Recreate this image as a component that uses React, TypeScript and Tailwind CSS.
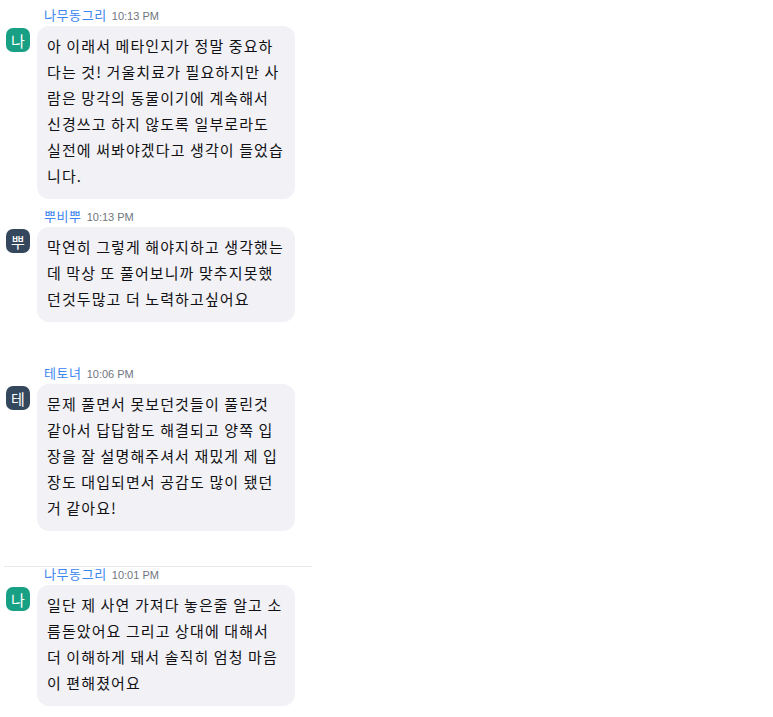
import React from 'react';

interface Message {
    id: number;
    name: string;
    initial: string;
    avatarColor: string;
    time: string;
    lines: string[];
    spacing: string;
}

const messages: Message[] = [
    {
        id: 1,
        name: '나무동그리',
        initial: '나',
        avatarColor: 'bg-[#17a083]',
        time: '10:13 PM',
        spacing: 'pt-[6px]',
        lines: [
            '아 이래서 메타인지가 정말 중요하',
            '다는 것! 거울치료가 필요하지만 사',
            '람은 망각의 동물이기에 계속해서',
            '신경쓰고 하지 않도록 일부로라도',
            '실전에 써봐야겠다고 생각이 들었습',
            '니다.',
        ],
    },
    {
        id: 2,
        name: '뿌비뿌',
        initial: '뿌',
        avatarColor: 'bg-[#34475d]',
        time: '10:13 PM',
        spacing: 'mt-[8px]',
        lines: [
            '막연히 그렇게 해야지하고 생각했는',
            '데 막상 또 풀어보니까 맞추지못했',
            '던것두많고 더 노력하고싶어요',
        ],
    },
    {
        id: 3,
        name: '테토녀',
        initial: '테',
        avatarColor: 'bg-[#34475d]',
        time: '10:06 PM',
        spacing: 'mt-[42px]',
        lines: [
            '문제 풀면서 못보던것들이 풀린것',
            '같아서 답답함도 해결되고 양쪽 입',
            '장을 잘 설명해주셔서 재밌게 제 입',
            '장도 대입되면서 공감도 많이 됐던',
            '거 같아요!',
        ],
    },
];

const last: Message = {
    id: 4,
    name: '나무동그리',
    initial: '나',
    avatarColor: 'bg-[#17a083]',
    time: '10:01 PM',
    spacing: '-mt-[2px]',
    lines: [
        '일단 제 사연 가져다 놓은줄 알고 소',
        '름돋았어요 그리고 상대에 대해서',
        '더 이해하게 돼서 솔직히 엄청 마음',
        '이 편해졌어요',
    ],
};

function ChatMessage({ msg }: { msg: Message }) {
    return (
        <div className={`flex gap-[7px] pl-[6px] ${msg.spacing}`}>
            {/* Avatar */}
            <div className="w-6 pt-[22px] shrink-0">
                <div className={`w-6 h-6 rounded-[7px] ${msg.avatarColor} flex items-center justify-center text-white text-[15px] leading-none`}>
                    {msg.initial}
                </div>
            </div>

            {/* Body */}
            <div className="flex flex-col">
                <div className="flex items-baseline gap-[5px] pl-[7px] h-[18px] mb-[2px] leading-[18px]">
                    <span className="text-[13px] tracking-[0.6px] text-[#3b86f0]">{msg.name}</span>
                    <span className="text-[11px] text-[#707680] font-['Liberation_Sans',sans-serif]">{msg.time}</span>
                </div>
                <div className="w-[258px] bg-[#f1f1f6] rounded-[12px] pl-[10px] pr-[10px] pt-[7px] pb-[10px] text-[15px] tracking-[1.1px] leading-[26px] text-[#111114]">
                    {msg.lines.map((line, i) => (
                        <div key={i} className="whitespace-nowrap">{line}</div>
                    ))}
                </div>
            </div>
        </div>
    );
}

export default function App() {
    return (
        <div className="w-[773px] h-[717px] bg-white overflow-hidden font-['Noto_Sans_CJK_KR','Noto_Sans',sans-serif]">
            {messages.map((m) => (
                <ChatMessage key={m.id} msg={m} />
            ))}

            {/* Divider */}
            <div className="mt-[35px] ml-[4px] w-[308px] h-px bg-[#e8e9ee]" />

            <ChatMessage msg={last} />
        </div>
    );
}
